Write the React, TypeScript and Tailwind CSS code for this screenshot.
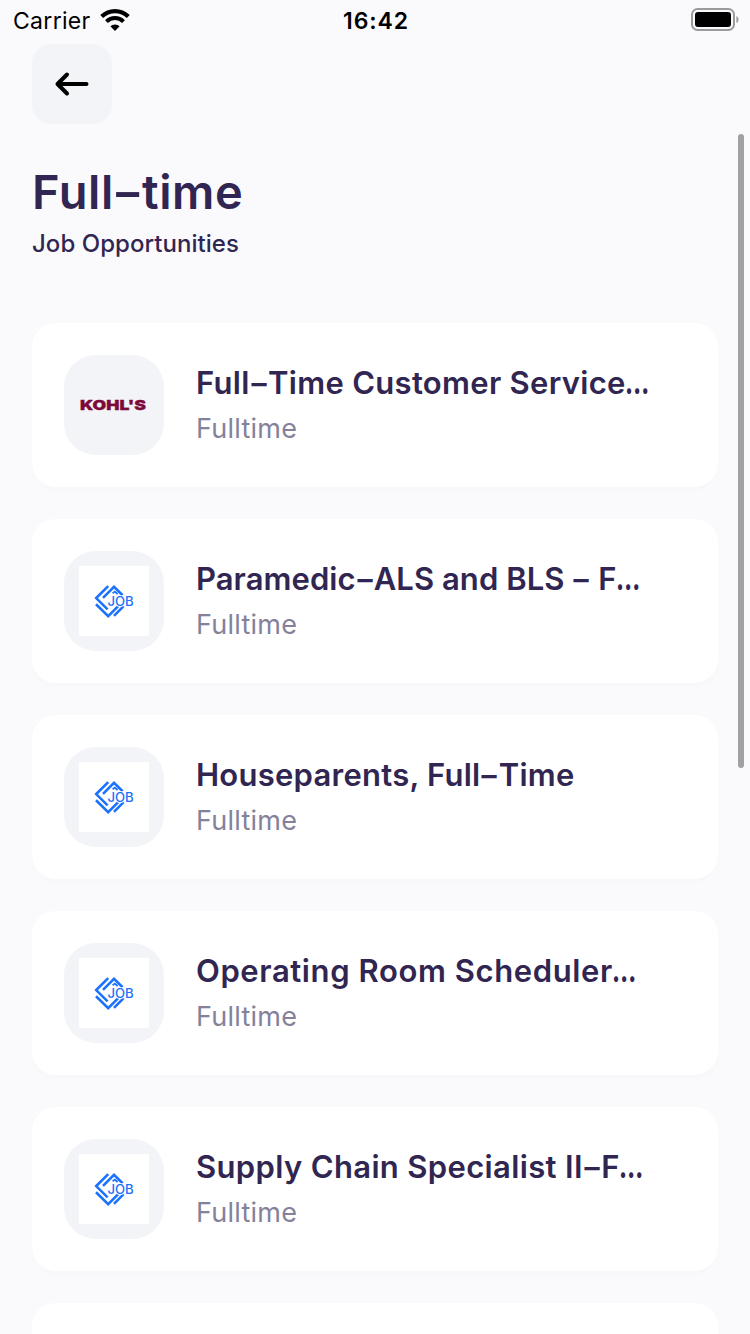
import React from "react";

type Job = { title: string; type: string; logo: "kohls" | "job"; tracking: string };

const jobs: Job[] = [
  { title: "Full-Time Customer Service…", type: "Fulltime", logo: "kohls", tracking: "tracking-[0.3px]" },
  { title: "Paramedic-ALS and BLS - F…", type: "Fulltime", logo: "job", tracking: "tracking-[0.05px]" },
  { title: "Houseparents, Full-Time", type: "Fulltime", logo: "job", tracking: "tracking-[0.25px]" },
  { title: "Operating Room Scheduler…", type: "Fulltime", logo: "job", tracking: "tracking-[0.6px]" },
  { title: "Supply Chain Specialist II-F…", type: "Fulltime", logo: "job", tracking: "tracking-[0.35px]" },
];

/* Widens hyphens and tightens the trailing ellipsis. */
function Heading({ text }: { text: string }) {
  return (
    <>
      {text.split(/(-|…)/).map((part, i) => {
        if (part === "-")
          return <span key={i} className="inline-block origin-center scale-x-[1.5] px-[0.06em]">-</span>;
        if (part === "…")
          return <span key={i} className="-ml-px inline-block origin-left scale-x-[0.74] font-extrabold">…</span>;
        return <React.Fragment key={i}>{part}</React.Fragment>;
      })}
    </>
  );
}

function StatusBar() {
  return (
    <header className="flex h-10 shrink-0 items-center justify-between pl-[13px] pr-[11px] text-black">
      <div className="flex w-[160px] items-center gap-[9px]">
        <span className="pt-[2px] text-[23px] leading-[38px] tracking-[0.3px]">Carrier</span>
        <svg width="30" height="22" viewBox="0 0 30 22" fill="none" stroke="black">
          <path d="M1.7 7.6A19 19 0 0 1 28.3 7.6" strokeWidth="4.2" />
          <path d="M6.5 12.6A12.1 12.1 0 0 1 23.5 12.6" strokeWidth="4" />
          <path d="M15 22L10.4 17.3A6.5 6.5 0 0 1 19.6 17.3Z" fill="black" stroke="none" />
        </svg>
      </div>
      <span className="pt-[2px] text-[23px] font-semibold leading-[38px] tracking-[0.9px]">16:42</span>
      <div className="flex w-[160px] justify-end">
        <svg width="48" height="24" viewBox="0 0 48 24">
          <rect x="1" y="1" width="42" height="21" rx="5.5" fill="none" stroke="#9b9b9d" strokeWidth="2" />
          <rect x="4" y="4" width="36" height="15" rx="3" fill="black" />
          <path d="M45.4 8Q47.6 9 47.6 11.5T45.4 15Z" fill="#9b9b9d" />
        </svg>
      </div>
    </header>
  );
}

function KohlsLogo() {
  return (
    <svg width="76" height="24" viewBox="0 0 76 24">
      <text x="4" y="17.4" textLength="66" lengthAdjust="spacingAndGlyphs" fontSize="13.5" fontWeight="900" fill="#7b0939" stroke="#7b0939" strokeWidth="0.3" fontFamily="Inter, sans-serif">
        KOHL'S
      </text>
    </svg>
  );
}

function JobLogo() {
  return (
    <div className="flex h-[70px] w-[70px] items-center justify-center bg-white">
      <svg width="40" height="34" viewBox="0 0 40 34" fill="none" stroke="#1b72fb" strokeWidth="2.6">
        <path d="M14.2 2.2L2.2 14.1L13.6 25.4" />
        <path d="M9 13.9L20 2.9L28.6 11.2" />
        <path d="M18.6 9.2L20.8 7.6L23.6 10" strokeWidth="1.8" />
        <path d="M2 20.2L14.2 32.1L24.2 22.2" />
        <path d="M20 31.8L29.6 22.2" />
        <text x="13.4" y="21.6" textLength="26.2" lengthAdjust="spacingAndGlyphs" fontSize="12.4" fontWeight="500" fill="#1b72fb" stroke="white" strokeWidth="1.6" paintOrder="stroke" fontFamily="Inter, sans-serif">
          JOB
        </text>
      </svg>
    </div>
  );
}

function JobCard({ job }: { job: Job }) {
  return (
    <li className="flex h-[164px] shrink-0 items-center gap-8 rounded-[24px] bg-white px-8 shadow-[0_4px_6px_rgba(60,60,90,0.01)]">
      <div className="flex h-[100px] w-[100px] shrink-0 items-center justify-center rounded-[32px] bg-[#f3f4f8]">
        {job.logo === "kohls" ? <KohlsLogo /> : <JobLogo />}
      </div>
      <div className="flex flex-col whitespace-nowrap">
        <h2 className={`text-[31px] font-semibold leading-[42px] text-[#312651] ${job.tracking}`}>
          <Heading text={job.title} />
        </h2>
        <p className="mt-[5px] text-[27px] leading-[39px] tracking-[0.25px] text-[#83829a]">{job.type}</p>
      </div>
    </li>
  );
}

export default function App() {
  return (
    <div className="relative flex h-[1334px] w-[750px] flex-col overflow-hidden bg-[#fafafc] font-['Inter',sans-serif]">
      <StatusBar />
      <main className="flex flex-col px-8 pt-1">
        <button aria-label="Back" className="flex h-20 w-20 items-center justify-center rounded-[20px] bg-[#f3f4f8]">
          <svg width="36" height="26" viewBox="0 0 36 26" fill="none" stroke="black" strokeWidth="4" strokeLinecap="round" strokeLinejoin="round">
            <path d="M32.5 13H3.5M13 3.5L3.5 13L13 22.5" />
          </svg>
        </button>
        <h1 className="mt-[38px] text-[47px] font-semibold leading-[60px] tracking-[0.6px] text-[#312651]">
          <Heading text="Full-time" />
        </h1>
        <p className="mt-[6px] text-[24px] font-medium leading-[32px] tracking-[0.05px] text-[#312651]">Job Opportunities</p>
        <ul className="mt-[63px] flex flex-col gap-8">
          {jobs.map((job) => (
            <JobCard key={job.title} job={job} />
          ))}
          <li className="h-[164px] shrink-0 rounded-[24px] bg-white" />
        </ul>
      </main>
      <div className="absolute left-[738px] top-[134px] h-[634px] w-[6px] rounded-full bg-[#a1a1a3]" />
    </div>
  );
}
